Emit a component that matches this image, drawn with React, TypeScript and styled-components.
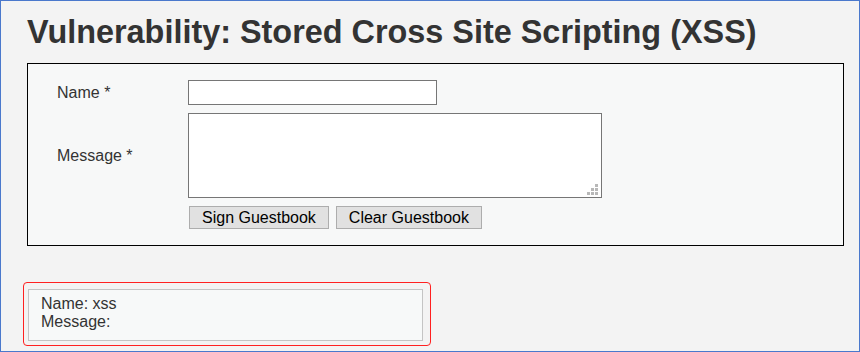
import React from "react";
import styled, { createGlobalStyle } from "styled-components";

const Global = createGlobalStyle`
  html, body { margin: 0; padding: 0; background: #ffffff; }
  * { box-sizing: border-box; }
`;

const Page = styled.div`
  width: 860px;
  height: 352px;
  border: 1px solid #4a78cc;
  background: #f3f3f3;
  padding: 13px 16px 0 26px;
  font-family: "Liberation Sans", Arial, sans-serif;
  color: #333333;
  overflow: hidden;
`;

const Title = styled.h1`
  margin: 0;
  font-size: 32.4px;
  font-weight: bold;
  line-height: normal;
  color: #333333;
`;

const FormBox = styled.div`
  margin-top: 12px;
  width: 817px;
  border: 1px solid #000000;
  background: #f7f8f8;
  padding: 16px 0 16px 29px;
`;

const FormGrid = styled.div`
  display: grid;
  grid-template-columns: 131px auto;
  row-gap: 8px;
  align-items: center;
  justify-items: start;
`;

const Label = styled.label`
  font-size: 16px;
  color: #333333;
`;

const TextInput = styled.input`
  width: 249px;
  height: 25px;
  border: 1px solid #767676;
  background: #ffffff;
  margin: 0;
  padding: 0 2px;
  font-family: "Liberation Sans", Arial, sans-serif;
  font-size: 16px;
`;

const AreaWrap = styled.div`
  position: relative;
  width: 414px;
  height: 85px;
`;

const TextArea = styled.textarea`
  display: block;
  width: 414px;
  height: 85px;
  border: 1px solid #767676;
  background: #ffffff;
  margin: 0;
  padding: 2px;
  resize: none;
  font-family: "Liberation Sans", Arial, sans-serif;
  font-size: 16px;
`;

const Grip = styled.svg`
  position: absolute;
  right: 4px;
  bottom: 3px;
  width: 11px;
  height: 11px;
  pointer-events: none;
`;

const Buttons = styled.div`
  display: flex;
  gap: 7px;
  padding-left: 1px;
`;

const Button = styled.button`
  height: 23px;
  margin: 0;
  padding: 0 12px;
  border: 1px solid #adadad;
  border-radius: 0;
  background: #e1e1e1;
  color: #000000;
  font-family: "Liberation Sans", Arial, sans-serif;
  font-size: 16px;
  line-height: 21px;
`;

const Highlight = styled.div`
  margin-top: 36px;
  margin-left: -4px;
  width: 408px;
  border: 1px solid #ff2020;
  border-radius: 4px;
  padding: 6px 7px 4px 4px;
`;

const Entry = styled.div`
  border: 1px solid #c4c4c4;
  background: #f7f9f9;
  padding: 5px 12px 8px;
  font-size: 16px;
  line-height: 18.4px;
  color: #333333;
`;

export default function App() {
  return (
    <>
      <Global />
      <Page>
        <Title>Vulnerability: Stored Cross Site Scripting (XSS)</Title>
        <FormBox>
          <FormGrid>
            <Label>Name *</Label>
            <TextInput type="text" />
            <Label>Message *</Label>
            <AreaWrap>
              <TextArea />
              <Grip viewBox="0 0 11 11">
                <rect x="8" y="0" width="3" height="3" fill="#b8b8b8" />
                <rect x="4" y="4" width="3" height="3" fill="#b8b8b8" />
                <rect x="8" y="4" width="3" height="3" fill="#b8b8b8" />
                <rect x="0" y="8" width="3" height="3" fill="#b8b8b8" />
                <rect x="4" y="8" width="3" height="3" fill="#b8b8b8" />
                <rect x="8" y="8" width="3" height="3" fill="#b8b8b8" />
              </Grip>
            </AreaWrap>
            <span />
            <Buttons>
              <Button type="button">Sign Guestbook</Button>
              <Button type="button">Clear Guestbook</Button>
            </Buttons>
          </FormGrid>
        </FormBox>
        <Highlight>
          <Entry>
            Name: xss
            <br />
            Message:
          </Entry>
        </Highlight>
      </Page>
    </>
  );
}
